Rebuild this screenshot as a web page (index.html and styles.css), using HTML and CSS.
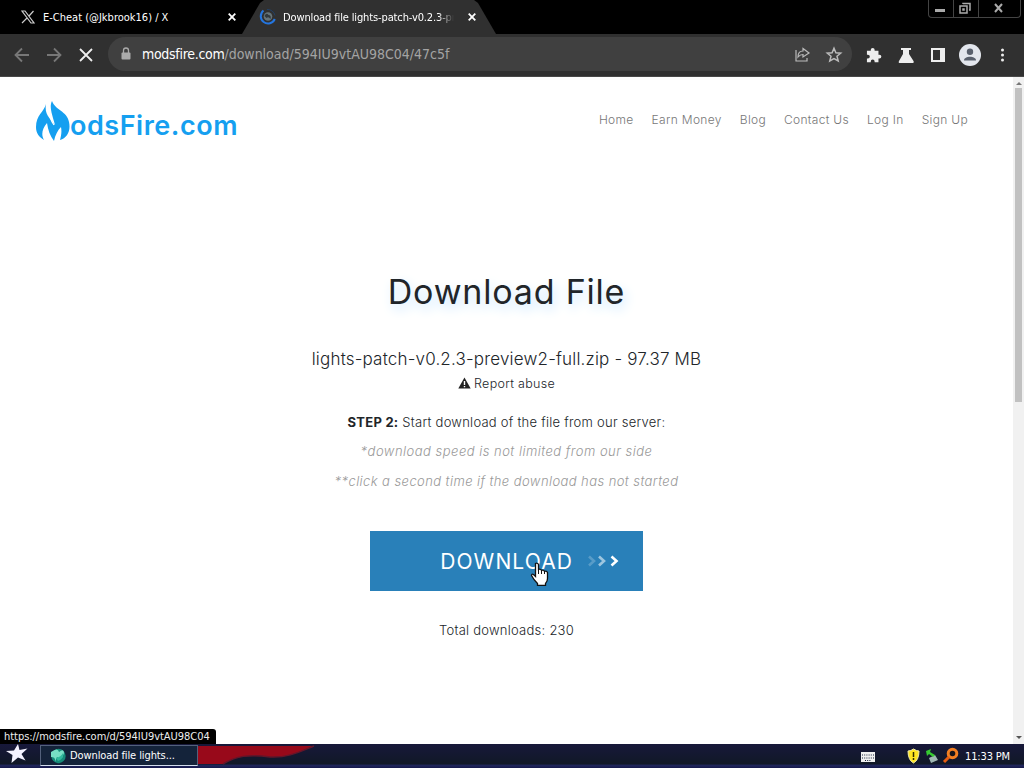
FILE: index.html
```html
<!DOCTYPE html>
<html lang="en">
<head>
<meta charset="utf-8">
<title>Download file lights-patch-v0.2.3-preview2-full.zip</title>
<link rel="stylesheet" href="styles.css">
</head>
<body>
<div class="screen">
  <div class="tabs">
    <div class="tab">
      <svg class="fav" width="14" height="14" viewBox="0 0 14 14" fill="none" stroke="#ccc"><path d="M1 1h3l9 12h-3zM12.500 1 8 6M6 8l-5 5" stroke-width="1.200"/></svg>
      <span class="tab-title t1">E-Cheat (@Jkbrook16) / X</span>
      <svg class="close" width="8" height="8" viewBox="0 0 8 8"><path d="M.7.7l6.600 6.600M7.300.7.7 7.300" stroke="#fff" stroke-width="1.800"/></svg>
    </div>
    <div class="tab active">
      <svg class="fav2" width="18" height="18" viewBox="0 0 18 18" fill="none"><circle cx="9" cy="8.500" r="4.300" fill="#66747a"/><path d="M5.500 8q2-4 4-1 3 0 2 4-2-3-4-1" fill="#30383d"/><path d="M4.500 2.500A7.300 7.300 0 1 0 15.800 11" stroke="#2475df" stroke-width="2"/><path d="M8 1.500a7.500 7.500 0 0 1 8 6" stroke="#234166"/></svg>
      <span class="tab-title t2">Download file lights-patch-v0.2.3-pr</span>
      <svg class="close" width="8" height="8" viewBox="0 0 8 8"><path d="M.7.7l6.600 6.600M7.300.7.7 7.300" stroke="#fff" stroke-width="1.800"/></svg>
    </div>
    <div class="window-buttons">
      <span><svg width="24" height="17"><path d="M6 10.500h10" stroke="#aaa" stroke-width="3"/></svg></span>
      <span><svg width="24" height="17" fill="none" stroke="#aaa" stroke-width="1.500"><path d="M9 4V3.500h7V10h-1M6 6h7v7H6zM9 9h1v1H9z"/></svg></span>
      <span><svg width="41" height="17"><path d="M16 4l7 8M23 4l-7 8" stroke="#aaa" stroke-width="2"/></svg></span>
    </div>
  </div>
  <div class="toolbar">
    <svg class="nav-icons" width="108" height="43" fill="none" stroke-width="1.800"><path d="M29 21H16M22 14.500 15.500 21l6.500 6.500M47 21h13M54 14.500l6.500 6.500-6.500 6.500" stroke="#777"/><path d="M80 15l12 12M92 15 80 27" stroke="#eee"/></svg>
    <div class="address">
      <svg width="12" height="14" viewBox="0 0 12 14"><path d="M3.500 6V3.500a2.500 2.500 0 0 1 5 0V6" fill="none" stroke="#aaa" stroke-width="1.300"/><rect x="1.500" y="5.500" width="9" height="7" rx="1" fill="#aaa"/></svg>
      <span class="url"><b>modsfire.com</b>/download/594IU9vtAU98C04/47c5f</span>
      <svg class="share" width="56" height="18" viewBox="0 0 56 18" fill="none" stroke="#bbb" stroke-width="1.200"><path d="M3 5v11h11v-3M5 12c0-4 2-6 5-6V3.500L16 8l-6 4V9.500Q7 9.500 5 12z"/><path d="m41 3.300 1.900 4.500 4.800.4-3.700 3.100 1.200 4.700-4.200-2.500-4.200 2.500 1.200-4.700-3.700-3.100 4.800-.4z" stroke-width="1.500"/></svg>
    </div>
    <svg class="tools" width="172" height="43" fill="#eee">
      <path d="M15 17h3v-1a2 2 0 0 1 4 0v1h4v4h1a2 2 0 0 1 0 4h-1v4h-4v-1a2 2 0 0 0-4 0v1h-4v-4h1a2 2 0 0 0 0-4h-1v-4z" transform="translate(1.500 .5) scale(.96)"/>
      <path d="M49 14h10v2h-2v4l4.500 7q1 2-1.500 2H48q-2 0-1-2l4-7v-4h-2z"/>
      <path fill-rule="evenodd" d="M79 14h14v14H79zM81 16v10h7V16z"/>
      <circle cx="118" cy="21" r="11" fill="#e3e6ed"/><circle cx="118" cy="17.700" r="3.200" fill="#59606d"/><path d="M112 26.500c0-5 12-5 12 0z" fill="#59606d"/>
      <circle cx="150.500" cy="16" r="1.500"/><circle cx="150.500" cy="21" r="1.500"/><circle cx="150.500" cy="26" r="1.500"/>
    </svg>
  </div>
  <div class="viewport">
    <main>
      <header>
        <div class="logo">
          <svg width="35" height="41" viewBox="0 0 35 41" fill="#159ff0"><path d="M11 3C9 11 1 14 1 26c0 6 3 10 8 13-3-5-2-11 3-17 1 7 3 13 7 18 1-6 4-11 7-14 1 5 0 9-1 13 7-2 11-9 9-18C32 10 20 9 17 0c-3 6 0 13 3 24C16 18 9 14 11 3z"/><path d="M14 8q0 9 5 16" fill="none" stroke="#fff" stroke-width="1.200"/></svg>
          <span>odsFire.com</span>
        </div>
        <nav><a>Home</a><a>Earn Money</a><a>Blog</a><a>Contact Us</a><a>Log In</a><a>Sign Up</a></nav>
      </header>
      <h1>Download File</h1>
      <p class="file">lights-patch-v0.2.3-preview2-full.zip - 97.37 MB</p>
      <p class="report"><svg width="13" height="12" viewBox="0 0 13 12"><path d="M6.500.4 12.700 11.500H.3z" fill="#222"/><path d="M6.500 4v4M6.500 9v1.300" stroke="#fff" stroke-width="1.400"/></svg><span>Report abuse</span></p>
      <p class="step"><b>STEP 2:</b> <span>Start download of the file from our server:</span></p>
      <p class="hint h1">*download speed is not limited from our side</p>
      <p class="hint h2">**click a second time if the download has not started</p>
      <a class="download"><span>DOWNLOAD</span><svg width="34" height="12" viewBox="0 0 34 12" fill="none" stroke="#fff" stroke-width="2.600"><path d="M2 1.500 7 6l-5 4.500" opacity=".22"/><path d="M12 1.500 17 6l-5 4.500" opacity=".55"/><path d="M24.500 1.500 29.500 6l-5 4.500"/></svg></a>
      <p class="total">Total downloads: 230</p>
    </main>
    <div class="scroll"><i class="up"></i><div class="thumb"></div><i class="down"></i></div>
  </div>
  <svg class="cursor" width="20" height="24" viewBox="0 0 20 24"><path d="M5.500 1.500q2-1 3 1v5q2-1 3 1 2-1 3 1 2-1 3 1v6q0 3-2 5v2h-8v-2q-4-4-6-8 0-2 2-1l2 2v-12z" fill="#fff" stroke="#111" stroke-width="1.300"/><path d="M8.500 7v5M11.500 8v4M14.500 9v3" stroke="#111"/></svg>
  <div class="status"><span>https://modsfire.com/d/594IU9vtAU98C04</span></div>
  <footer class="taskbar">
    <svg class="start" width="40" height="24"><path d="m18 1 1.500 6 8-1.500-6 5.500 4 6.500-7.500-3-6.500 5.500 1-8L6 8l8-.5z" fill="#f4f3ff" transform="translate(0 -1)"/></svg>
    <div class="task"><svg width="17" height="16" viewBox="0 0 17 16"><circle cx="8.500" cy="8" r="7.200" fill="#178c7a"/><path d="M1 4q7-5 8 0 5-4 5 1l-2 5q-3 1-5-1l-2 5q1-5-4-5z" fill="#79dfc5"/><path d="M6 10q5-1 7-5 1 6-5 8z" fill="#31ba9d"/></svg><span>Download file lights...</span></div>
    <svg class="ribbon" width="260" height="24"><path d="M0 2h116C103 7 91 14 72 13 51 10 38 12 25 20H0z" fill="#98091a"/><path d="M116 2C103 7 91 14 72 13 51 10 38 12 25 20" fill="none" stroke="#63162a" stroke-width="1.500"/></svg>
    <div class="tray">
      <svg width="98" height="24" viewBox="0 0 98 24"><path d="M0 8h14v10H0z" fill="#f0f0f0"/><path d="M1 11h12M1 14h12M4 16.500h6" stroke="#172039" stroke-dasharray="1 1.200"/><path d="M52.500 5q3 2 5.500 2 0 9-5.500 12Q47 16 47 7q3 0 5.500-2z" fill="#ffe622" stroke="#f4edaa"/><path d="M52.500 8v5M52.500 14v2" stroke="#302c00" stroke-width="1.500"/><path d="m68 14 6-3 3 5-7 3z" fill="#a0b7b4"/><path d="m65 7 5-2-1 3 5 3-2 2-4-3-2 2z" fill="#36cb31"/><circle cx="91.500" cy="9.500" r="4.300" fill="#17151b" stroke="#f27f22" stroke-width="3"/><path d="m88 13-5 5" stroke="#e65c12" stroke-width="3"/></svg>
      <time>11:33 PM</time>
    </div>
  </footer>
</div>
</body>
</html>
```
FILE: styles.css
```css
* { box-sizing: border-box; }
body { margin: 0; overflow: hidden; }
.screen { position: relative; width: 1024px; height: 768px; display: flex; flex-direction: column; background: #fff; font-family: "DejaVu Sans Condensed", "DejaVu Sans", sans-serif; }
.tabs { height: 34px; display: flex; background: #000; color: #fff; }
.tab { height: 34px; display: flex; align-items: center; width: 242px; padding-left: 21px; }
.tab.active { width: 254px; background: #303030; clip-path: polygon(0 100%, 18px 3px, 22px 0, 232px 0, 236px 3px, 100% 100%); padding-left: 17px; }
.tab-title { font-size: 11px; white-space: nowrap; overflow: hidden; }
.t1 { width: 185px; margin-left: 8px; }
.t2 { width: 171px; margin-left: 6px; letter-spacing: -.13px; -webkit-mask-image: linear-gradient(to right, #000 155px, transparent); mask-image: linear-gradient(to right, #000 155px, transparent); }
.active .close { margin-left: 14px; }
.window-buttons { display: flex; height: 18px; margin-left: auto; margin-right: 3px; border: 1px solid #444; border-top: 0; border-radius: 0 0 4px 4px; }
.window-buttons span { display: flex; }
.window-buttons span + span { border-left: 1px solid #444; }
.toolbar { height: 43px; background: #303030; border-bottom: 1px solid #484848; display: flex; align-items: center; }
.address { width: 744px; height: 34px; border-radius: 17px; background: #404040; display: flex; align-items: center; padding-left: 12px; margin-top: -2px; }
.url { margin-left: 10px; font-size: 14px; color: #a4a4a4; white-space: nowrap; width: 651px; font-weight: 200; }
.url b { color: #fff; font-weight: 400; letter-spacing: -.3px; }
.viewport { display: flex; height: 667px; }
main { width: 1013px; font-family: Inter, sans-serif; color: #212529; text-align: center; display: flex; flex-direction: column; align-items: center; }
header { width: 1013px; height: 174px; display: flex; align-items: flex-start; padding: 24px 45px 0 35px; }
.logo { display: flex; align-items: flex-start; color: #159ff0; }
.logo span { font-size: 27px; line-height: 30px; font-weight: 600; margin-top: 10px; letter-spacing: .52px; }
nav { display: flex; gap: 18px; margin-left: auto; margin-top: 11px; font-size: 12px; line-height: 16px; color: #777; white-space: nowrap; font-weight: 300; letter-spacing: .32px; }
h1 { margin: 20px 0 0; height: 42px; line-height: 42px; font-size: 34px; font-weight: 400; letter-spacing: .8px; text-shadow: 3px 5px 12px #c5e4ff; }
p { margin: 0; white-space: nowrap; }
.file { height: 26px; line-height: 26px; margin-top: 33px; font-size: 17px; font-weight: 300; letter-spacing: .18px; }
.report { height: 20px; display: flex; align-items: center; margin-top: 1px; font-size: 12.500px; font-weight: 300; letter-spacing: .3px; gap: 3px; }
.step { height: 20px; line-height: 20px; margin-top: 19px; font-size: 13px; font-weight: 300; letter-spacing: .25px; }
.step b { font-weight: 700; }
.hint { height: 20px; line-height: 20px; margin-top: 9px; font-size: 13px; font-style: italic; color: #999; font-weight: 300; letter-spacing: .48px; text-shadow: none; }
.h2 { margin-top: 10px; letter-spacing: .42px; }
.download { width: 273px; height: 60px; margin-top: 40px; background: #2980b9; color: #fff; display: flex; align-items: center; justify-content: flex-end; padding-right: 22px; gap: 14px; font-size: 21px; letter-spacing: 1.100px; }
.total { height: 20px; line-height: 20px; margin-top: 29px; font-size: 13px; font-weight: 300; letter-spacing: .25px; }
.scroll { width: 11px; background: #f1f1f1; display: flex; flex-direction: column; align-items: center; padding: 5px 1px; }
.scroll i { width: 0; height: 0; border: 3px solid transparent; }
.up { border-top: 0 !important; border-bottom: 3px solid #777 !important; }
.thumb { width: 7px; height: 314px; margin-top: 3px; background: #c1c1c1; }
.down { margin-top: auto; border-bottom: 0 !important; border-top: 3px solid #555 !important; }
.cursor { position: absolute; left: 530px; top: 562px; }
.status { position: absolute; left: 0; top: 729px; width: 216px; height: 15px; background: #000; color: #eee; border-radius: 0 3px 0 0; font-size: 11px; line-height: 16px; padding-left: 4px; white-space: nowrap; letter-spacing: -.04px; }
.taskbar { height: 24px; display: flex; background: linear-gradient(#17183a, #111827 82%, #20265c 90%, #15184a); color: #fff; font-size: 11px; }
.task { width: 158px; height: 21px; display: flex; align-items: center; border: 1px solid #53617b; border-bottom-color: #d2ddec; background: #14233a; padding-left: 9px; gap: 3px; white-space: nowrap; margin-top: 1px; letter-spacing: -.1px; }
.tray { display: flex; align-items: center; margin-left: auto; padding-right: 14px; gap: 6px; white-space: nowrap; }
.tray time { letter-spacing: -.15px; }
```
